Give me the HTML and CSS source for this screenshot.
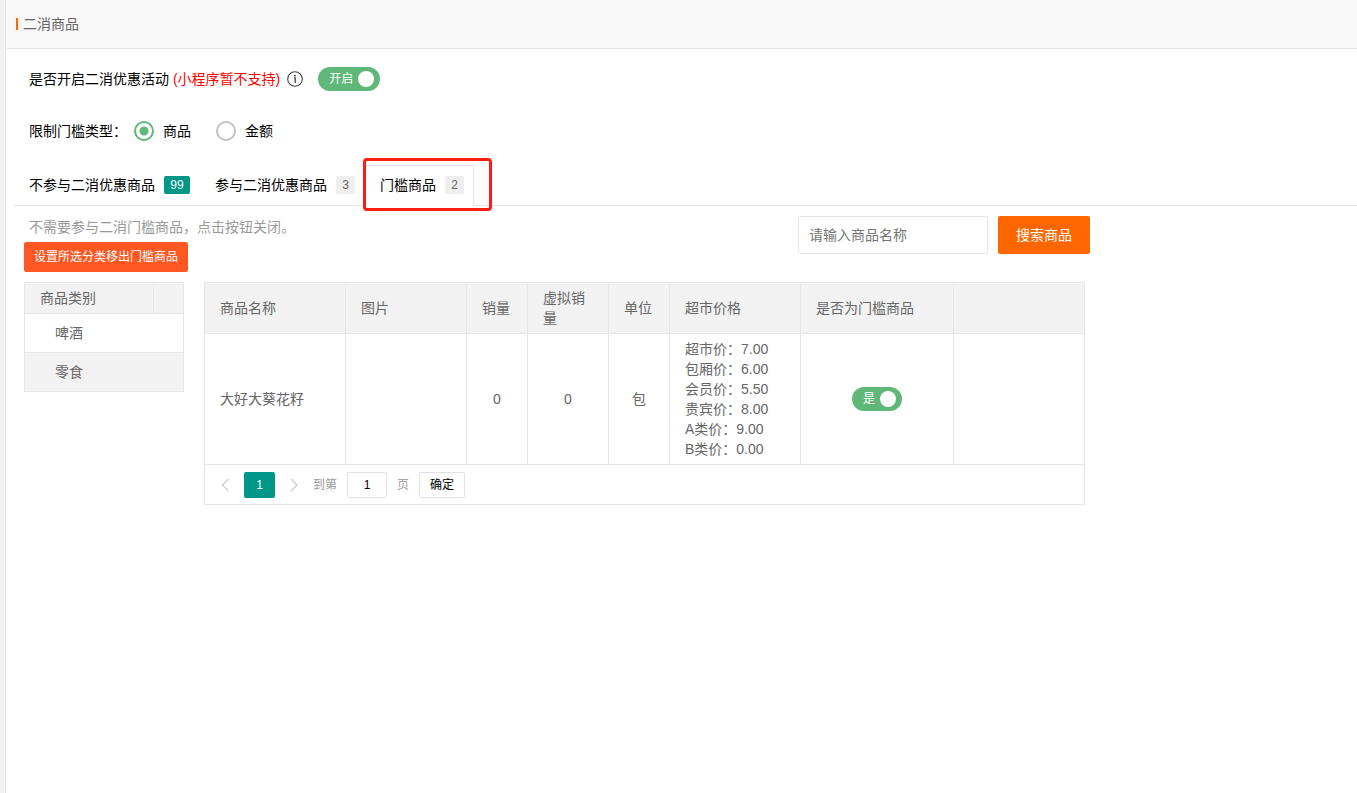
FILE: index.html
```html
<!DOCTYPE html>
<html lang="zh-CN">
<head>
<meta charset="utf-8">
<meta name="viewport" content="width=device-width, initial-scale=1">
<title>二消商品</title>
<link rel="stylesheet" href="styles.css">
</head>
<body>
<main class="page">
  <header class="page-header"><h1 class="page-title">二消商品</h1></header>
  <div class="content">
    <div class="form-row activity-row">
      <span>是否开启二消优惠活动 <span class="warning">(小程序暂不支持)</span></span>
      <svg class="info-icon" viewBox="0 0 16 16" aria-hidden="true"><circle cx="8" cy="8" r="7.3" fill="none" stroke="#444" stroke-width="1.1"/><circle cx="8" cy="4.7" r="0.9" fill="#444"/><path d="M7 6.9H8.2V12" fill="none" stroke="#444" stroke-width="1.3"/></svg>
      <label class="switch"><span>开启</span><input type="checkbox" checked></label>
    </div>
    <div class="form-row" role="radiogroup" aria-labelledby="limit-label">
      <span class="limit-label" id="limit-label">限制门槛类型：</span>
      <label class="radio"><input type="radio" name="limit" checked>商品</label>
      <label class="radio"><input type="radio" name="limit">金额</label>
    </div>
    <nav class="tabs">
      <a class="tab" href="#excluded">不参与二消优惠商品<span class="badge badge-green">99</span></a>
      <a class="tab" href="#included">参与二消优惠商品<span class="badge">3</span></a>
      <a class="tab tab-active" href="#threshold">门槛商品<span class="badge">2</span></a>
    </nav>
    <section class="panel" id="threshold">
      <div class="toolbar">
        <div class="toolbar-left">
          <p class="hint">不需要参与二消门槛商品，点击按钮关闭。</p>
          <button class="btn-remove" type="button">设置所选分类移出门槛商品</button>
        </div>
        <form class="search">
          <input class="search-input" type="text" placeholder="请输入商品名称" aria-label="商品名称">
          <button class="btn-search" type="button">搜索商品</button>
        </form>
      </div>
      <div class="tables">
        <div class="category-box">
          <table class="grid category">
            <colgroup><col class="w-category"><col></colgroup>
            <thead><tr><th>商品类别</th><th></th></tr></thead>
            <tbody>
              <tr><td colspan="2">啤酒</td></tr>
              <tr class="selected"><td colspan="2">零食</td></tr>
            </tbody>
          </table>
        </div>
        <div class="product-box">
          <table class="grid product">
            <colgroup><col class="w-name"><col class="w-image"><col class="w-short"><col class="w-virtual"><col class="w-short"><col class="w-price"><col class="w-flag"><col></colgroup>
            <thead><tr><th>商品名称</th><th>图片</th><th>销量</th><th>虚拟销量</th><th>单位</th><th>超市价格</th><th>是否为门槛商品</th><th></th></tr></thead>
            <tbody>
              <tr>
                <td>大好大葵花籽</td>
                <td></td>
                <td class="center">0</td>
                <td class="center">0</td>
                <td class="center">包</td>
                <td>超市价：7.00<br>包厢价：6.00<br>会员价：5.50<br>贵宾价：8.00<br>A类价：9.00<br>B类价：0.00</td>
                <td class="center"><label class="switch"><span>是</span><input type="checkbox" checked></label></td>
                <td></td>
              </tr>
            </tbody>
          </table>
          <div class="pager">
            <button class="pager-arrow" type="button" aria-label="上一页"><svg viewBox="0 0 12 14" aria-hidden="true"><path d="M9.5 1L3.5 7L9.5 13"/></svg></button>
            <button class="pager-current" type="button">1</button>
            <button class="pager-arrow" type="button" aria-label="下一页"><svg viewBox="0 0 12 14" aria-hidden="true"><path d="M3 1L9 7L3 13"/></svg></button>
            <label class="pager-jump">到第<input type="text" value="1">页</label>
            <button class="pager-confirm" type="button">确定</button>
          </div>
        </div>
      </div>
    </section>
  </div>
</main>
</body>
</html>
```
FILE: styles.css
```css
* {
  box-sizing: border-box;
}

body {
  margin: 0;
  padding-left: 5px;
  background: #f2f2f2;
  color: #000;
  font: 14px/20px "Liberation Sans", "Noto Sans CJK SC", sans-serif;
}

button,
input {
  margin: 0;
  font: inherit;
}

button {
  padding: 0;
  border: 0;
  cursor: pointer;
}

.page {
  min-height: 100vh;
  border-left: 1px solid #e6e6e6;
  background: #fff;
}

.page-header {
  display: flex;
  align-items: center;
  height: 49px;
  padding-left: 10px;
  border-bottom: 1px solid #e6e6e6;
  background: #f8f8f8;
}

.page-title {
  display: flex;
  align-items: center;
  gap: 5px;
  margin: 0;
  color: #666;
  font-size: 14px;
  font-weight: 400;
}

.page-title::before {
  width: 2px;
  height: 12px;
  background: #ff6600;
  content: "";
}

.content {
  padding: 18px 0 0 8px;
}

.form-row {
  display: flex;
  align-items: center;
  height: 24px;
  margin-bottom: 28px;
  padding-left: 15px;
}

.form-row + .form-row {
  margin-bottom: 22px;
}

.warning {
  color: #f00;
}

.info-icon {
  width: 16px;
  height: 16px;
  margin: 0 15px 0 7px;
}

.switch {
  display: inline-flex;
  align-items: center;
  gap: 5px;
  height: 24px;
  padding: 0 6px 0 11px;
  border-radius: 12px;
  background: #5fb878;
  color: #fff;
  font-size: 12px;
  vertical-align: middle;
  cursor: pointer;
}

.switch input {
  width: 16px;
  height: 16px;
  border-radius: 50%;
  background: #fff;
  appearance: none;
}

.limit-label {
  margin-right: 7px;
}

.radio {
  display: flex;
  align-items: center;
  gap: 9px;
  margin-right: 25px;
}

.radio input {
  width: 20px;
  height: 20px;
  border: 2px solid #c2c2c2;
  border-radius: 50%;
  appearance: none;
}

.radio input:checked {
  border-color: #5fb878;
  background: radial-gradient(circle, #5fb878 4px, #fff 5px);
}

.tabs {
  display: flex;
  height: 41px;
  border-bottom: 1px solid #e6e6e6;
}

.tab {
  display: flex;
  align-items: center;
  gap: 9px;
  height: 41px;
  padding: 0 9px 2px 14px;
  border: 1px solid transparent;
  color: #000;
  text-decoration: none;
}

.tab-active {
  position: relative;
  border-color: #e6e6e6;
  border-bottom-color: #fff;
  border-radius: 2px 2px 0 0;
}

.tab-active::after {
  position: absolute;
  inset: -8px -19px -6px -3px;
  border: 3px solid #fe1d10;
  border-radius: 4px;
  content: "";
}

.badge {
  min-width: 19px;
  height: 18px;
  padding: 0 6px;
  border-radius: 2px;
  background: #eee;
  color: #666;
  font-size: 12px;
  line-height: 18px;
  text-align: center;
}

.badge-green {
  min-width: 26px;
  background: #009688;
  color: #fff;
}

.panel {
  padding: 10px;
}

.toolbar {
  display: flex;
  justify-content: space-between;
  align-items: flex-start;
  max-width: 1066px;
  margin-bottom: 10px;
}

.toolbar-left {
  display: flex;
  flex-direction: column;
  align-items: flex-start;
  gap: 4px;
}

.hint {
  margin: 0;
  padding-left: 5px;
  color: #999;
  line-height: 22px;
}

.btn-remove {
  height: 30px;
  padding: 0 10px;
  border-radius: 2px;
  background: #ff5722;
  color: #fff;
  font-size: 12px;
}

.search {
  display: flex;
  gap: 10px;
}

.search-input {
  width: 190px;
  height: 38px;
  padding: 0 10px;
  border: 1px solid #e6e6e6;
  border-radius: 2px;
}

.search-input::placeholder {
  color: #757575;
}

.btn-search {
  height: 38px;
  padding: 0 18px;
  border-radius: 2px;
  background: #ff6600;
  color: #fff;
}

.tables {
  display: flex;
  align-items: flex-start;
  gap: 20px;
}

.category-box,
.product-box {
  border: 1px solid #e6e6e6;
}

.category-box {
  flex: 0 0 160px;
}

.product-box {
  flex: 0 1 881px;
}

.grid {
  width: 100%;
  border-spacing: 0;
  color: #666;
  table-layout: fixed;
}

.grid th,
.grid td {
  padding: 5px 15px;
  border-right: 1px solid #e6e6e6;
  border-bottom: 1px solid #e6e6e6;
  font-weight: 400;
  text-align: left;
}

.grid th {
  background: #f2f2f2;
}

.grid th:last-child,
.grid td:last-child {
  border-right: 0;
}

.grid .center {
  text-align: center;
}

.category td {
  padding: 9px 30px;
}

.category .selected td {
  border-bottom: 0;
  background: #f2f2f2;
}

.w-category { width: 129px; }
.w-name { width: 141px; }
.w-image { width: 121px; }
.w-short { width: 61px; }
.w-virtual { width: 81px; }
.w-price { width: 131px; }
.w-flag { width: 153px; }

.pager {
  display: flex;
  align-items: center;
  padding: 7px 0 6px 1px;
  color: #999;
  font-size: 12px;
}

.pager-arrow {
  display: flex;
  justify-content: center;
  align-items: center;
  width: 38px;
  height: 26px;
  background: none;
}

.pager-arrow svg {
  width: 12px;
  height: 14px;
  fill: none;
  stroke: #d2d2d2;
  stroke-width: 1.5;
}

.pager-current {
  width: 31px;
  height: 26px;
  border-radius: 2px;
  background: #009688;
  color: #fff;
}

.pager-jump {
  display: flex;
  align-items: center;
  gap: 10px;
  margin-right: 10px;
}

.pager-jump input {
  width: 40px;
  height: 26px;
  padding: 0;
  border: 1px solid #e2e2e2;
  border-radius: 2px;
  color: #000;
  text-align: center;
}

.pager-confirm {
  height: 26px;
  padding: 0 10px;
  border: 1px solid #e2e2e2;
  border-radius: 2px;
  background: #fff;
  color: #000;
}
```
